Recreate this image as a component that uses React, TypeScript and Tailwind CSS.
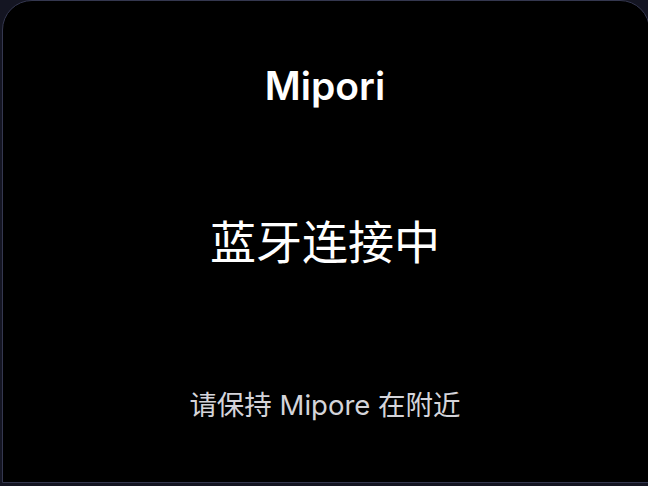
export default function App() {
    return (
        <div className="h-[486px] w-[648px] overflow-hidden bg-[#141522] pl-[2px] pb-[3px]">
            {/* Card */}
            <div
                className="flex h-[483px] w-[648px] flex-col items-center rounded-t-[30px] border border-[#34374f] bg-black pr-[2px] text-white"
                style={{ fontFamily: 'Inter, "Noto Sans CJK SC", sans-serif' }}
            >
                <h1 className="mt-[61px] text-[39px] font-semibold leading-[48px]">Mipori</h1>
                <p className="mt-[102px] text-[46px] leading-[60px]">蓝牙连接中</p>
                <p className="mt-[115px] text-[27.5px] leading-[36px] text-[#d4d4da]">请保持 Mipore 在附近</p>
            </div>
        </div>
    );
}
